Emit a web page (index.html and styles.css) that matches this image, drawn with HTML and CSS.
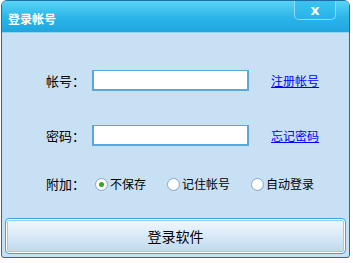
FILE: index.html
```html
<!DOCTYPE html>
<html lang="zh-CN">
<head>
    <meta charset="UTF-8">
    <title>登录帐号</title>
    <link rel="stylesheet" href="styles.css">
</head>
<body>
<div class="window">
    <div class="titlebar">
        <span class="title">登录帐号</span>
        <button type="button" class="close">x</button>
    </div>
    <div class="content">
        <div class="row row-account">
            <label class="label" for="account">帐号：</label>
            <input class="field" type="text" id="account">
            <a class="link" href="#">注册帐号</a>
        </div>
        <div class="row row-password">
            <label class="label" for="password">密码：</label>
            <input class="field" type="password" id="password">
            <a class="link" href="#">忘记密码</a>
        </div>
        <div class="row row-extra">
            <span class="label">附加：</span>
            <label class="option opt-1"><span class="radio checked"></span>不保存</label>
            <label class="option opt-2"><span class="radio"></span>记住帐号</label>
            <label class="option opt-3"><span class="radio"></span>自动登录</label>
        </div>
        <button type="button" class="login">登录软件</button>
    </div>
</div>
</body>
</html>
```

FILE: styles.css
```css
body {
    margin: 0;
    background: #ffffff;
    font-family: "Noto Sans CJK SC", "DejaVu Sans", sans-serif;
    font-size: 13px;
    line-height: 16px;
    color: #000;
}
.window {
    width: 347px;
    height: 256px;
    margin-left: 1px;
    border: 1px solid #1b6fa6;
    border-radius: 6px 6px 3px 3px;
    background: #c8e0f3;
    display: flex;
    flex-direction: column;
    overflow: hidden;
}
.titlebar {
    height: 31px;
    flex: none;
    background: linear-gradient(#58d4f6, #2bb4e8 55%, #1fa6e0);
    border-bottom: 1px solid #8ed6f3;
    display: flex;
    align-items: flex-start;
    justify-content: space-between;
}
.title {
    color: #ffffff;
    font-size: 12px;
    font-weight: bold;
    line-height: 16px;
    margin: 10px 0 0 6px;
}
.close {
    width: 42px;
    height: 20px;
    margin: -1px 13px 0 0;
    padding: 0;
    border: 1px solid #8edcf6;
    border-top: none;
    border-radius: 0 0 5px 5px;
    background: linear-gradient(#3cc4f0, #28b2e8);
    color: #ffffff;
    font-family: "DejaVu Sans", sans-serif;
    font-size: 14px;
    font-weight: bold;
    line-height: 16px;
}
.content {
    flex: 1;
    display: flex;
    flex-direction: column;
    padding: 37px 3px 0 3px;
}
.row {
    display: flex;
    align-items: center;
    height: 21px;
}
.row-password {
    margin-top: 34px;
}
.row-extra {
    margin-top: 30px;
    height: 16px;
}
.label {
    width: 46px;
    margin-left: 41px;
}
.field {
    width: 157px;
    height: 21px;
    box-sizing: border-box;
    border: 2px solid #5aa8da;
    border-width: 1px 2px 2px 2px;
    background: #ffffff;
    padding: 0 3px;
    margin: 0;
}
.link {
    margin-left: 22px;
    color: #0000ff;
    font-size: 12px;
    text-decoration: underline;
}
.option {
    display: flex;
    align-items: center;
    font-size: 12px;
}
.opt-1 { margin-left: 3px; }
.opt-2 { margin-left: 21px; }
.opt-3 { margin-left: 21px; }
.radio {
    width: 11px;
    height: 11px;
    border: 1px solid #8aa8cc;
    border-radius: 50%;
    background: radial-gradient(circle at 40% 40%, #ffffff 50%, #dfe8f2);
    margin-right: 2px;
    display: flex;
    align-items: center;
    justify-content: center;
}
.radio.checked::after {
    content: "";
    width: 5px;
    height: 5px;
    border-radius: 50%;
    background: #3aa51c;
}
.login {
    margin-top: 26px;
    height: 36px;
    border: 1px solid #3aa6e0;
    border-radius: 4px;
    box-shadow: inset 0 0 0 1px #ffffff, inset 0 0 0 2px #8fd0f2;
    background: linear-gradient(#f2f8fe, #dcebf8 45%, #bcd7ee);
    font-family: "Noto Sans CJK SC", sans-serif;
    font-size: 14px;
    color: #000;
    padding: 0;
}
```
